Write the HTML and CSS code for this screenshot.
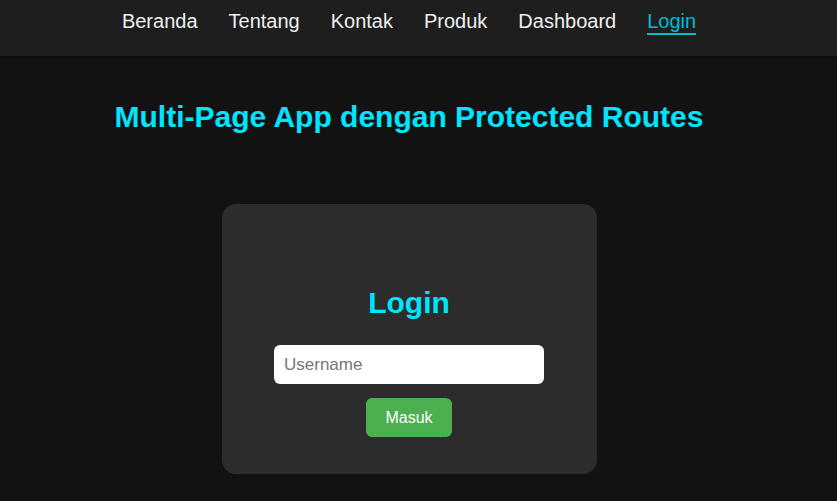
FILE: index.html
```html
<!DOCTYPE html>
<html lang="id">
<head>
<meta charset="utf-8">
<title>Multi-Page App</title>
<link rel="stylesheet" href="styles.css">
</head>
<body>
<div class="page">
  <nav class="nav">
    <a class="nav-link" href="#">Beranda</a>
    <a class="nav-link" href="#">Tentang</a>
    <a class="nav-link" href="#">Kontak</a>
    <a class="nav-link" href="#">Produk</a>
    <a class="nav-link" href="#">Dashboard</a>
    <a class="nav-link active" href="#">Login</a>
  </nav>
  <main class="main">
    <h1 class="title">Multi-Page App dengan Protected Routes</h1>
    <div class="card">
      <h2 class="card-title">Login</h2>
      <input class="input" type="text" placeholder="Username">
      <button class="btn">Masuk</button>
    </div>
  </main>
</div>
</body>
</html>
```
FILE: styles.css
```css
* { box-sizing: border-box; }
html, body {
  margin: 0;
  background: #121212;
  font-family: "Liberation Sans", Arial, sans-serif;
  height: 100%;
  overflow: hidden;
}
.page {
  width: 100%;
}
.nav {
  height: 56px;
  background: #1e1e1e;
  display: flex;
  justify-content: center;
  align-items: flex-start;
  gap: 31px;
  padding: 10px 19px 0 0;
  box-shadow: 0 2px 4px rgba(0,0,0,0.4);
}
.nav-link {
  color: #f0f0f0;
  text-decoration: none;
  font-size: 20px;
  line-height: 23px;
}
.nav-link.active {
  color: #00bcd4;
  border-bottom: 2px solid #00bcd4;
}
.main {
  display: flex;
  flex-direction: column;
  align-items: center;
  padding-right: 19px;
}
.title {
  margin: 44px 0 0;
  color: #00e5ff;
  font-size: 30px;
  line-height: 34px;
  font-weight: bold;
}
.card {
  margin-top: 70px;
  width: 375px;
  height: 270px;
  background: #2c2c2c;
  border-radius: 14px;
  display: flex;
  flex-direction: column;
  align-items: center;
  padding-top: 82px;
}
.card-title {
  margin: 0;
  color: #00e5ff;
  font-size: 30px;
  line-height: 34px;
  font-weight: bold;
}
.input {
  margin-top: 25px;
  width: 270px;
  height: 39px;
  border: none;
  border-radius: 6px;
  background: #fff;
  padding: 0 10px;
  font-family: "Liberation Sans", Arial, sans-serif;
  font-size: 17px;
  outline: none;
}
.input::placeholder { color: #757575; }
.btn {
  margin-top: 14px;
  height: 39px;
  padding: 0 19px;
  border: none;
  border-radius: 6px;
  background: #4caf50;
  color: #fff;
  font-family: "Liberation Sans", Arial, sans-serif;
  font-size: 16px;
}
```
